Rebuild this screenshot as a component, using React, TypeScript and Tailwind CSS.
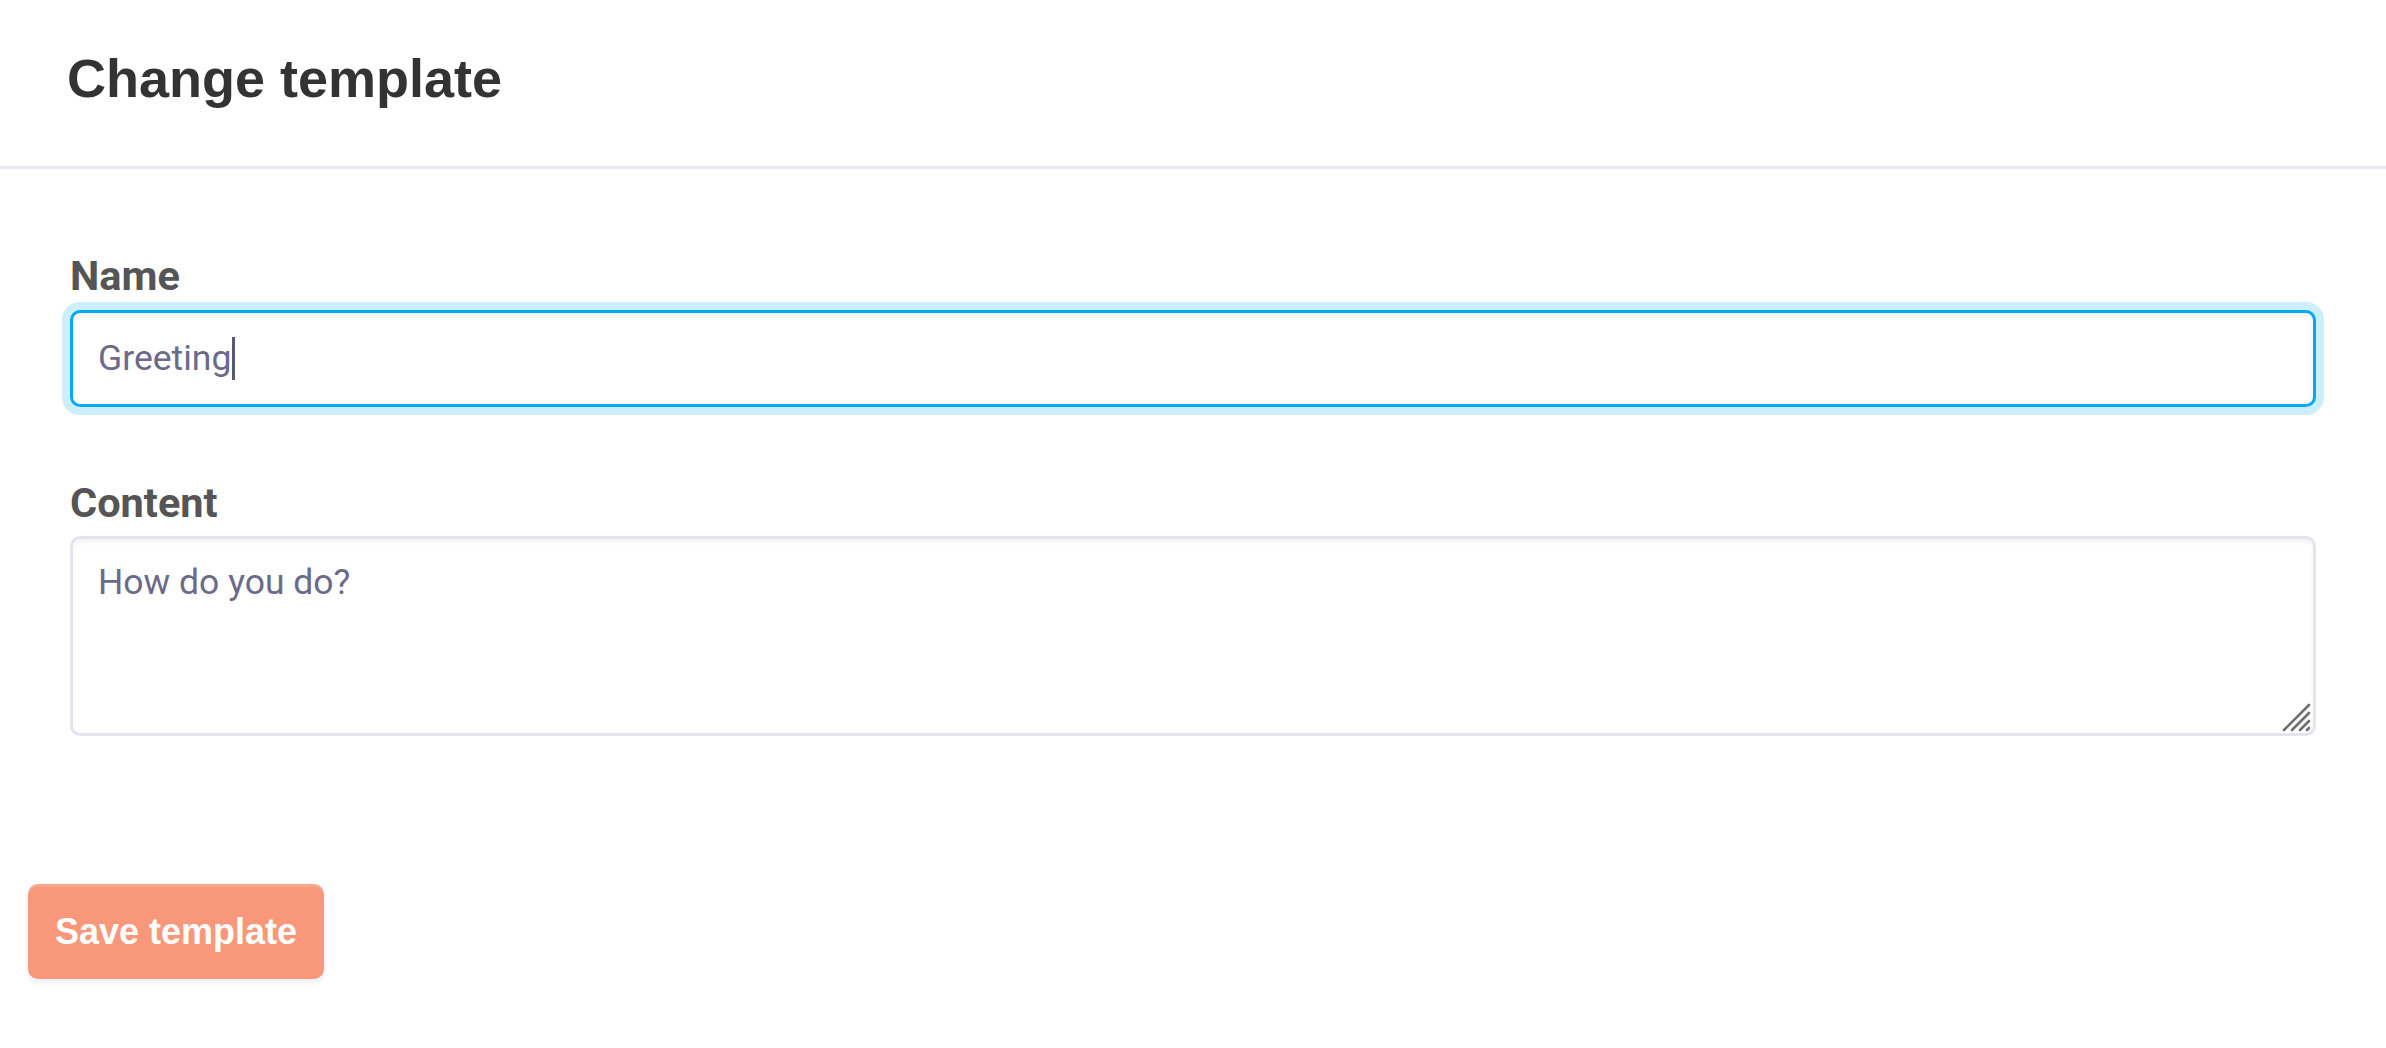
import React from "react";

export default function App() {
  return (
    <div className="min-h-screen w-full bg-white">
      <header className="h-[169px] border-b-[3px] border-[#e8ebef] pl-[67px] pt-[46px]">
        <h1 className="font-['Liberation_Sans',Arial,sans-serif] text-[54px] leading-[1.2] font-bold text-[#333333]">
          Change template
        </h1>
      </header>
      <main className="px-[70px] pt-[83px]">
        <div className="flex flex-col">
          <label className="font-['Roboto',sans-serif] text-[41.5px] leading-[47px] font-bold text-[#555555]">
            Name
          </label>
          <div
            role="textbox"
            className="mt-[11px] flex h-[97px] w-full items-center rounded-[10px] border-[3px] border-[#03a9f4] bg-white pl-[25px] font-['Roboto',sans-serif] text-[35.5px] text-[#6c6a8a] shadow-[inset_0_3px_5px_rgba(0,0,0,0.05)] ring-[8px] ring-[#03a9f4]/20"
          >
            <span>Greeting</span>
            <span className="ml-px inline-block h-[43px] w-[3px] bg-[#5a5776]" />
          </div>
        </div>
        <div className="mt-[72px] flex flex-col">
          <label className="font-['Roboto',sans-serif] text-[41.5px] leading-[47px] font-bold text-[#555555]">
            Content
          </label>
          <div className="relative mt-[10px]">
            <textarea
              defaultValue="How do you do?"
              className="block h-[200px] w-full resize-none rounded-[10px] border-[3px] border-[#e2e6ec] bg-white px-[25px] pt-[23px] font-['Roboto',sans-serif] text-[35.5px] leading-[41px] text-[#6c6a8a] outline-none shadow-[inset_0_3px_5px_rgba(0,0,0,0.05)]"
            />
            <svg
              className="pointer-events-none absolute bottom-[4px] right-[5px]"
              width="30"
              height="30"
              viewBox="0 0 30 30"
            >
              <g stroke="#6e6e6e" strokeWidth="2.6" strokeLinecap="round">
                <line x1="28" y1="3" x2="3" y2="28" />
                <line x1="28" y1="11" x2="11" y2="28" />
                <line x1="28" y1="19" x2="19" y2="28" />
                <line x1="28" y1="26" x2="26" y2="28" />
              </g>
            </svg>
          </div>
        </div>
      </main>
      <div className="pl-[28px] pt-[148px]">
        <button className="flex h-[95px] items-center rounded-[10px] bg-[#f9977a] px-[27px] font-['Liberation_Sans',Arial,sans-serif] text-[36px] font-bold text-white shadow-[inset_0_3px_0_rgba(255,255,255,0.15),0_3px_6px_rgba(0,0,0,0.08)]">
          Save template
        </button>
      </div>
    </div>
  );
}
